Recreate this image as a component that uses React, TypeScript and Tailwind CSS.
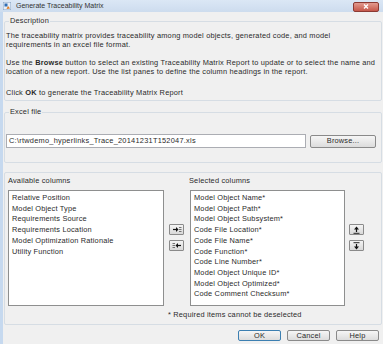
const available = [
  "Relative Position",
  "Model Object Type",
  "Requirements Source",
  "Requirements Location",
  "Model Optimization Rationale",
  "Utility Function",
];

const selected = [
  "Model Object Name*",
  "Model Object Path*",
  "Model Object Subsystem*",
  "Code File Location*",
  "Code File Name*",
  "Code Function*",
  "Code Line Number*",
  "Model Object Unique ID*",
  "Model Object Optimized*",
  "Code Comment Checksum*",
];

function SmallButton({ children }: { children: React.ReactNode }) {
  return (
    <div className="w-[15px] h-[11px] flex items-center justify-center border border-[#8a8a8a] rounded-[1px] bg-linear-to-b from-[#f4f4f4] to-[#d8d8d8]">
      {children}
    </div>
  );
}

function Button({ label, primary }: { label: string; primary?: boolean }) {
  return (
    <div
      className={`h-[11px] w-[43px] flex items-center justify-center rounded-[2px] border bg-linear-to-b from-[#f6f6f6] to-[#dcdcdc] ${
        primary ? "border-[#3c7fb1]" : "border-[#8a8a8a]"
      }`}
    >
      {label}
    </div>
  );
}

function ListBox({ items, width }: { items: string[]; width: string }) {
  return (
    <div className={`${width} h-[116px] bg-white border border-[#8e8f8f] pt-[2px] pl-[3px] leading-[10.7px]`}>
      {items.map((item) => (
        <div key={item} className="whitespace-nowrap">
          {item}
        </div>
      ))}
    </div>
  );
}

export default function App() {
  return (
    <div className="w-[383px] h-[344px] overflow-hidden bg-[#f0f0f0] text-[#2a2a2a] text-[7.4px] leading-[8px] tracking-[0.18px] font-['Liberation_Sans',Arial,sans-serif] flex flex-col">
      {/* title bar */}
      <div className="h-[12px] flex items-center bg-linear-to-b from-[#dbe7f5] to-[#cddcee] pl-[3px] pr-[4px]">
        <svg width="8" height="8" viewBox="0 0 8 8">
          <rect x="0" y="0" width="8" height="8" fill="#e8eef6" stroke="#6b8fb8" strokeWidth="0.8" />
          <rect x="1.5" y="1.5" width="3" height="3" fill="#2f6db3" />
          <path d="M3.5 7 L5 4 L7 6.5 Z" fill="#e07b1f" />
        </svg>
        <span className="ml-[5px] text-[#333] text-[7px] tracking-normal">Generate Traceability Matrix</span>
        <div className="ml-auto w-[26px] h-[10px] mt-[1px] flex items-center justify-center rounded-[2px] border border-[#8c3a33] bg-linear-to-b from-[#e29a8f] to-[#c5574a]">
          <svg width="6" height="5" viewBox="0 0 6 5">
            <path d="M1 0.5 L5 4.5 M5 0.5 L1 4.5" stroke="#fff" strokeWidth="1.3" />
          </svg>
        </div>
      </div>

      <div className="flex-1 flex flex-col border-l-[3px] border-[#c6d9ef] pl-[1px] pr-[1px] bg-[#f0f0f0]">
        {/* description */}
        <fieldset className="mt-[5px] border border-[#d6dde4] rounded-[2px] pl-[1px] pr-[4px] pb-[3px]">
          <legend className="ml-[3px] px-[1px] leading-[8px]">Description</legend>
          <div className="pt-[6px] leading-[9px] whitespace-nowrap tracking-[0.2px]">
            <div>The traceability matrix provides traceability among model objects, generated code, and model</div>
            <div>requirements in an excel file format.</div>
            <div className="mt-[9px]">
              Use the <b>Browse</b> button to select an existing Traceability Matrix Report to update or to select the
              name and
            </div>
            <div>location of a new report. Use the list panes to define the column headings in the report.</div>
            <div className="mt-[12px]">
              Click <b>OK</b> to generate the Traceability Matrix Report
            </div>
          </div>
        </fieldset>

        {/* excel file */}
        <fieldset className="mt-[7px] border border-[#d6dde4] rounded-[2px] pl-[1px] pr-[5px] pb-[14px]">
          <legend className="ml-[3px] px-[1px] leading-[8px]">Excel file</legend>
          <div className="mt-[18px] flex items-center">
            <div className="w-[300px] h-[14px] bg-white border border-[#abadb3] flex items-center pl-[2px] tracking-[0.25px]">
              C:\rtwdemo_hyperlinks_Trace_20141231T152047.xls
            </div>
            <div className="ml-[4px] flex-1 h-[13px] flex items-center justify-center rounded-[2px] border border-[#8a8a8a] bg-linear-to-b from-[#f6f6f6] to-[#dcdcdc]">
              Browse...
            </div>
          </div>
        </fieldset>

        {/* columns */}
        <div className="mt-[9px] border border-[#d6dde4] rounded-[2px] pt-[4px] pb-[5px]">
          <div className="flex">
            <div className="ml-[3px] w-[181px]">Available columns</div>
            <div>Selected columns</div>
          </div>
          <div className="mt-[5px] flex items-start">
            <ListBox items={available} width="ml-[3px] w-[156px]" />
            <div className="ml-[5px] mt-[34px] flex flex-col gap-[5px]">
              <SmallButton>
                <svg width="10" height="7" viewBox="0 0 10 7">
                  <path d="M1 3.5 H5" stroke="#111" strokeWidth="1.2" />
                  <path d="M4 1 L6.5 3.5 L4 6 Z" fill="#111" />
                  <path d="M7 1.5 H9.5 M7 3.5 H9.5 M7 5.5 H9.5" stroke="#555" strokeWidth="0.8" />
                </svg>
              </SmallButton>
              <SmallButton>
                <svg width="10" height="7" viewBox="0 0 10 7">
                  <path d="M0.5 1.5 H3 M0.5 3.5 H3 M0.5 5.5 H3" stroke="#555" strokeWidth="0.8" />
                  <path d="M6 1 L3.5 3.5 L6 6 Z" fill="#111" />
                  <path d="M5 3.5 H9" stroke="#111" strokeWidth="1.2" />
                </svg>
              </SmallButton>
            </div>
            <ListBox items={selected} width="ml-[6px] w-[155px]" />
            <div className="ml-[4px] mt-[34px] flex flex-col gap-[5px]">
              <SmallButton>
                <svg width="7" height="8" viewBox="0 0 7 8">
                  <path d="M3.5 0.5 L6 3.5 H1 Z" fill="#111" />
                  <path d="M3.5 3 V6" stroke="#111" strokeWidth="1.2" />
                  <path d="M0.5 7.3 H6.5" stroke="#111" strokeWidth="0.9" />
                </svg>
              </SmallButton>
              <SmallButton>
                <svg width="7" height="8" viewBox="0 0 7 8">
                  <path d="M0.5 0.7 H6.5" stroke="#111" strokeWidth="0.9" />
                  <path d="M3.5 2 V5" stroke="#111" strokeWidth="1.2" />
                  <path d="M3.5 7.5 L6 4.5 H1 Z" fill="#111" />
                </svg>
              </SmallButton>
            </div>
          </div>
          <div className="mt-[5px] ml-[163px]">* Required items cannot be deselected</div>
        </div>

        {/* bottom buttons */}
        <div className="mt-[5px] flex justify-end gap-[6px] pr-[3px]">
          <Button label="OK" primary />
          <Button label="Cancel" />
          <Button label="Help" />
        </div>
      </div>
    </div>
  );
}
